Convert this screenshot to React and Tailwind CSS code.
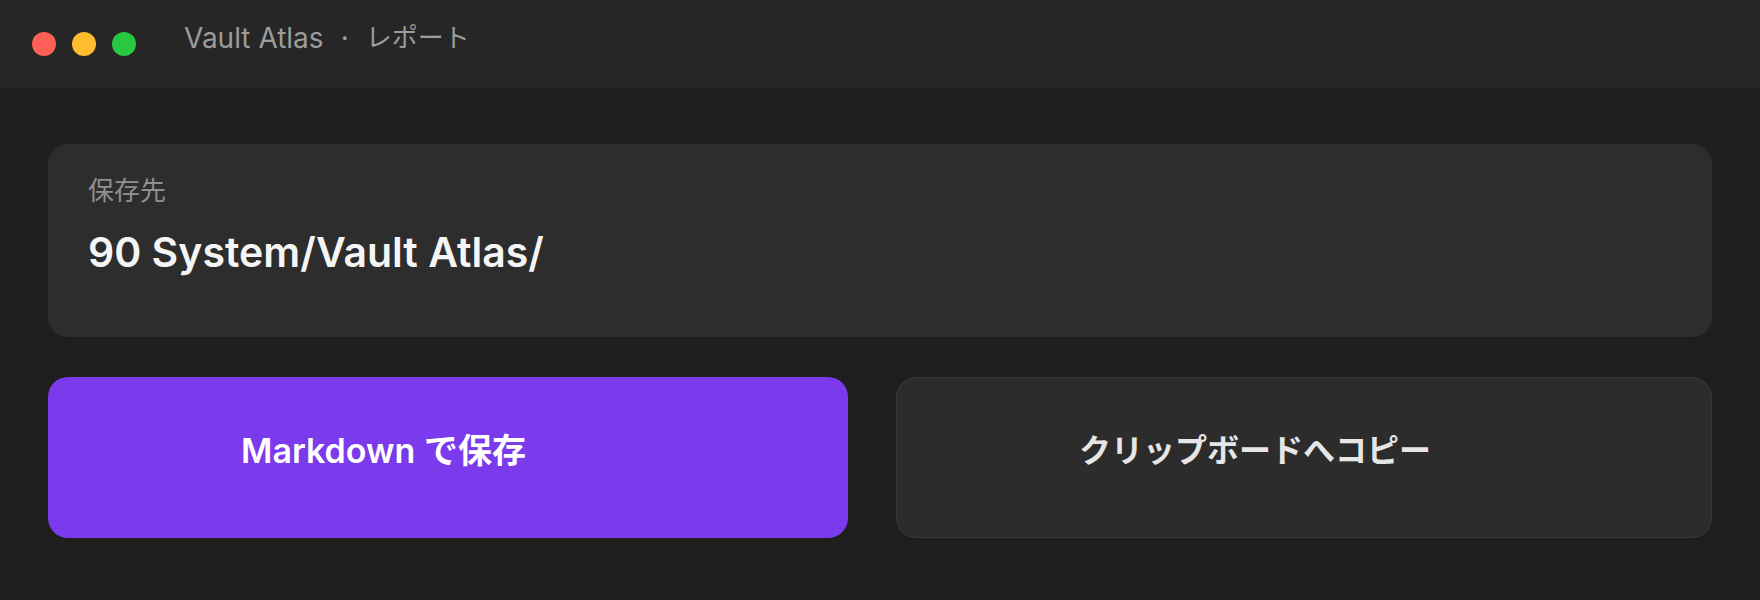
import React from 'react';

const font = { fontFamily: 'Inter, "Noto Sans CJK JP", sans-serif' };

function TitleBar() {
  return (
    <div className="h-[88px] bg-[#262626] flex items-start px-8">
      {/* traffic lights */}
      <div className="h-full flex items-center gap-4">
        <span className="w-6 h-6 rounded-full bg-[#ff5f57]" />
        <span className="w-6 h-6 rounded-full bg-[#febc2e]" />
        <span className="w-6 h-6 rounded-full bg-[#28c840]" />
      </div>
      <div className="ml-12 pt-[18px] text-[28px] leading-10 text-[#9c9c9c] flex">
        <span>Vault Atlas</span>
        <span className="mx-[17px]">·</span>
        <span className="text-[26px]">レポート</span>
      </div>
    </div>
  );
}

export default function App() {
  return (
    <div className="w-[1760px] h-[600px] bg-[#1e1e1e] overflow-hidden" style={font}>
      <TitleBar />

      <div className="px-12 pt-14">
        {/* destination card */}
        <div className="h-[193px] bg-[#2d2d2d] rounded-[20px] px-10 pt-[29px]">
          <div className="text-[26px] leading-9 text-[#8e8e93]">保存先</div>
          <div className="mt-[19px] text-[41px] leading-[48px] font-semibold text-[#f5f5f5]">
            90 System/Vault Atlas/
          </div>
        </div>

        {/* actions */}
        <div className="flex gap-12 mt-10">
          <button className="w-[800px] h-[161px] rounded-[20px] bg-[#7c3aed] text-white text-[34px] font-semibold pr-[129px] pb-[14px]">
            Markdown で保存
          </button>
          <button className="flex-1 h-[161px] rounded-[20px] bg-[#2c2c2c] border border-[#3a3a3a] text-[#e6e6e6] text-[32px] font-semibold pr-[98px] pb-[14px]">
            クリップボードへコピー
          </button>
        </div>
      </div>
    </div>
  );
}
